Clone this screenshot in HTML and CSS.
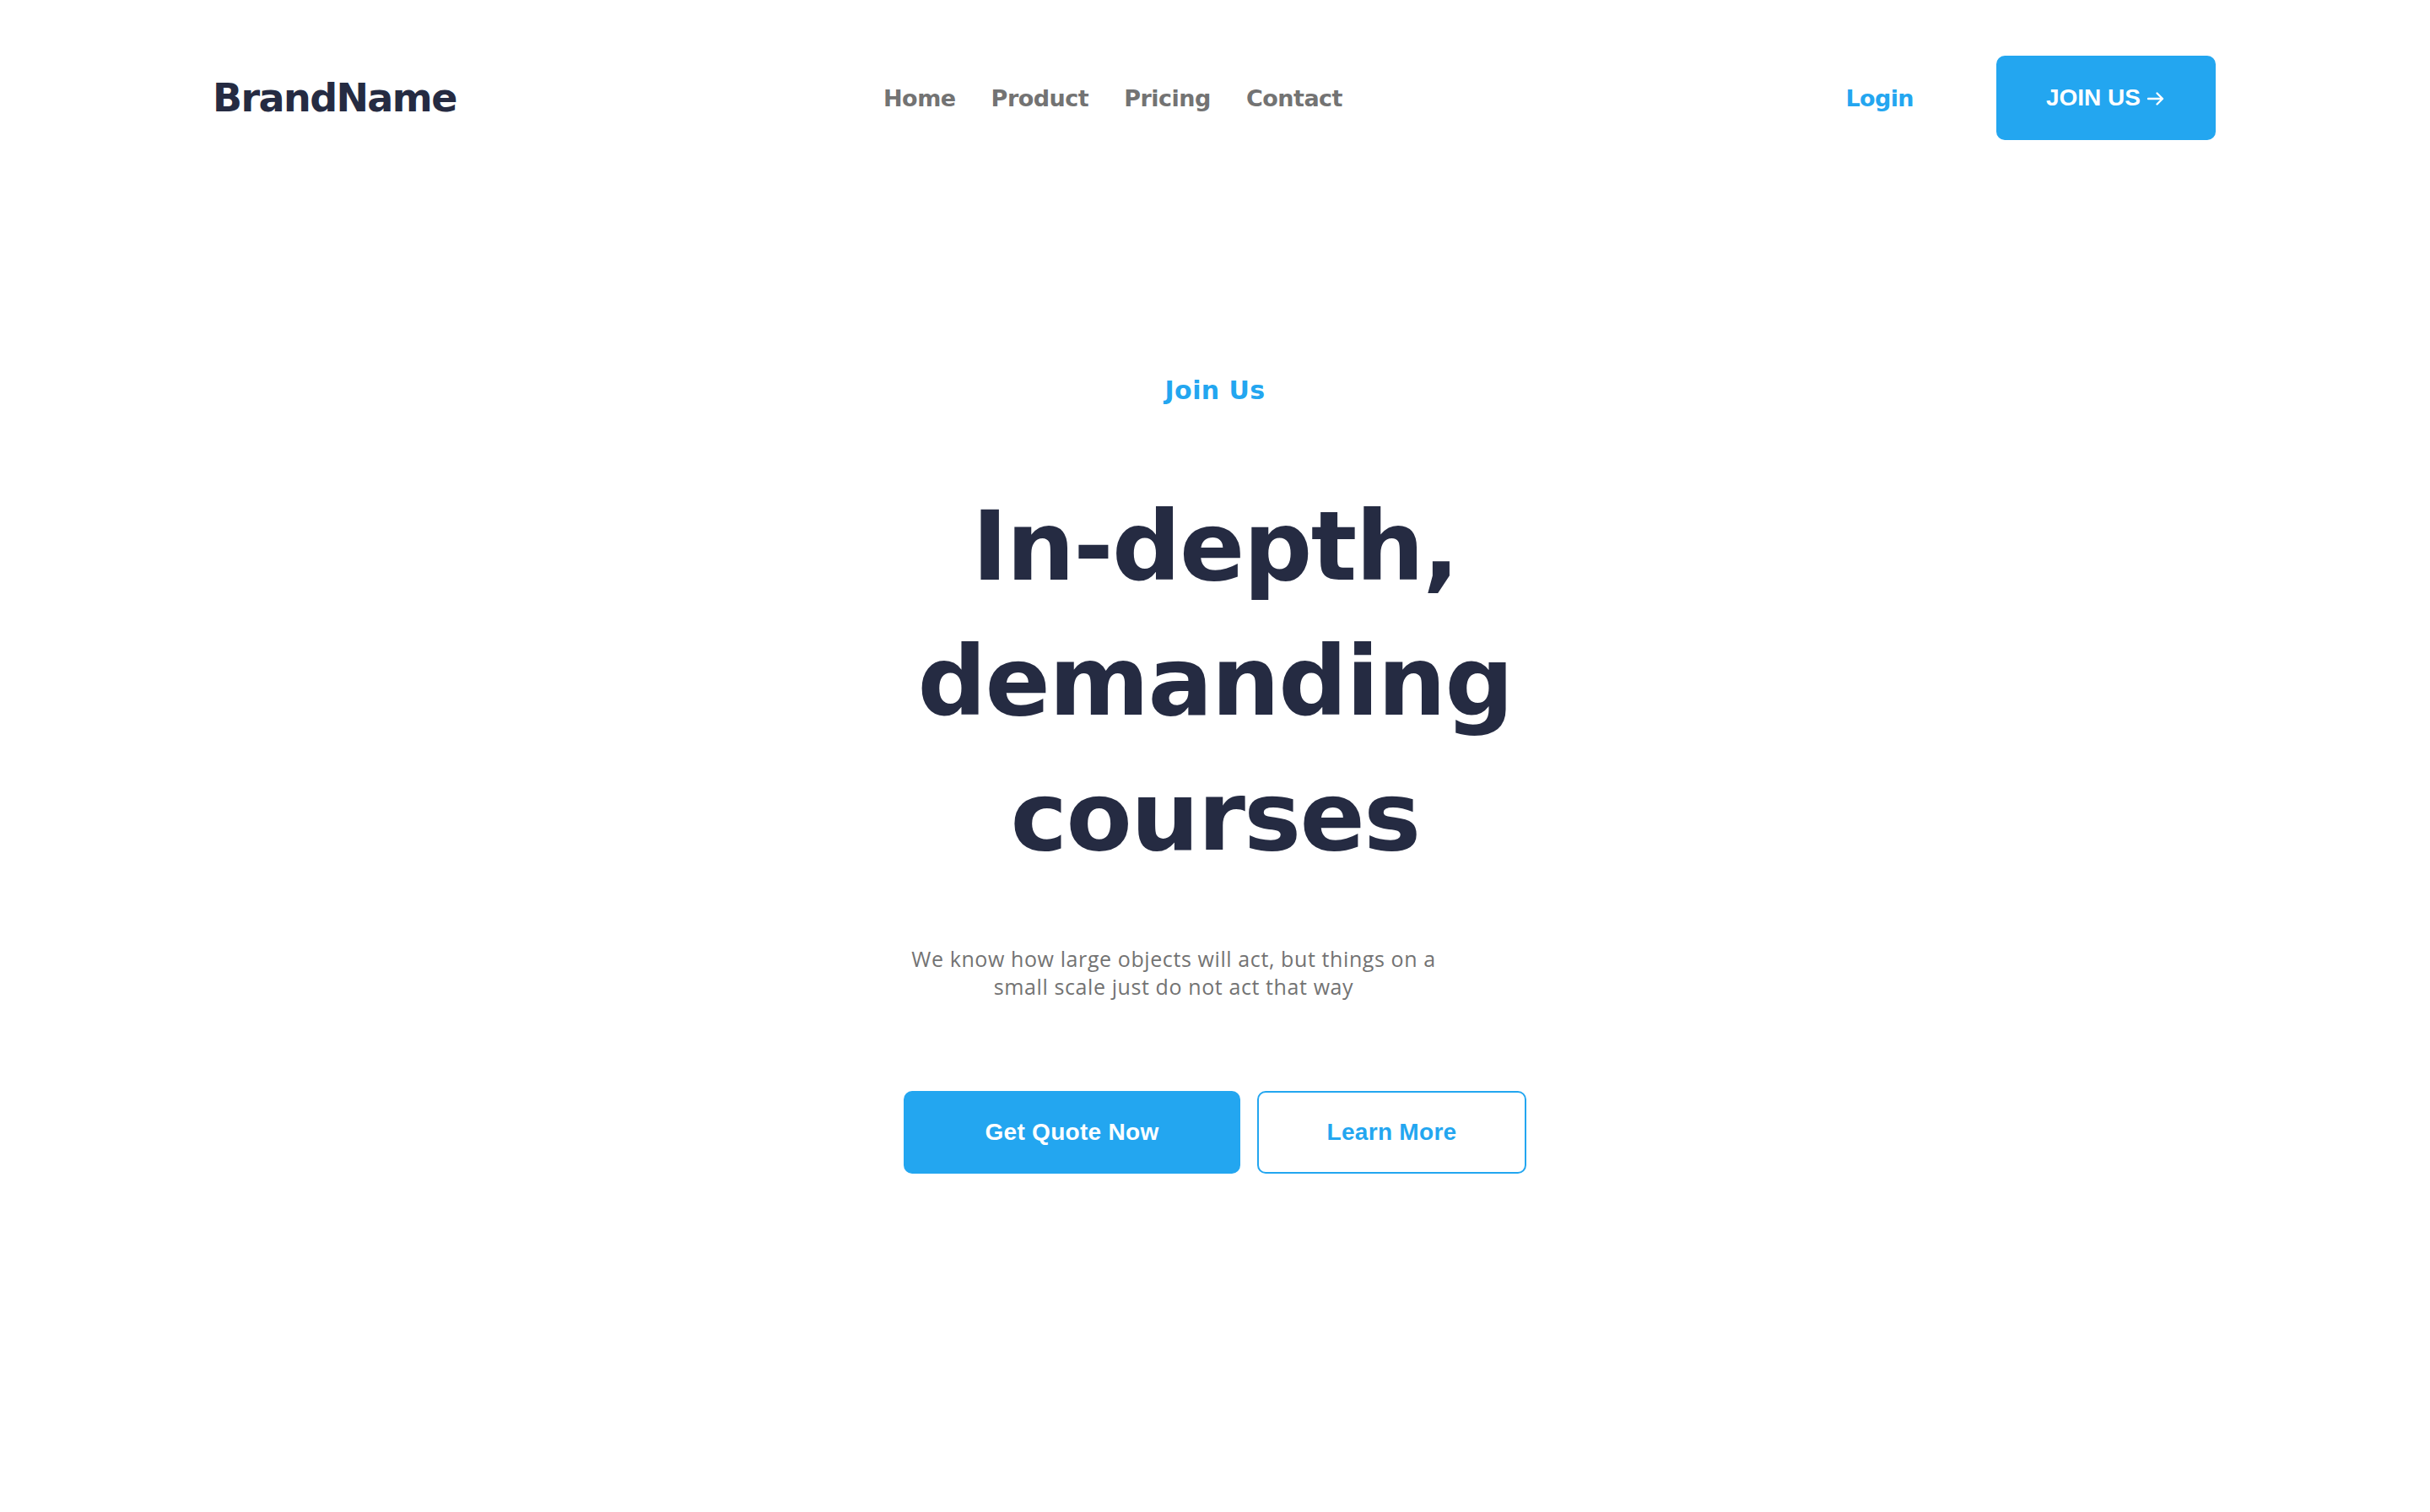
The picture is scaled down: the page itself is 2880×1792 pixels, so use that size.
FILE: index.html
```html
<!DOCTYPE html>
<html lang="en">
<head>
<meta charset="utf-8">
<title>BrandName</title>
<link rel="stylesheet" href="styles.css">
</head>
<body>
<header class="header">
  <div class="brand">BrandName</div>
  <nav class="nav">
    <a class="nav-link" href="#">Home</a>
    <a class="nav-link" href="#">Product</a>
    <a class="nav-link" href="#">Pricing</a>
    <a class="nav-link" href="#">Contact</a>
  </nav>
  <div class="actions">
    <a class="login" href="#">Login</a>
    <a class="join-btn" href="#">JOIN US
      <svg class="arrow" viewBox="0 0 24 24" width="24" height="24" aria-hidden="true"><path d="M3 12H20M13.5 5.5L20 12L13.5 18.5" fill="none" stroke="#fff" stroke-width="2.4" stroke-linecap="round" stroke-linejoin="round"/></svg>
    </a>
  </div>
</header>
<main class="hero">
  <p class="eyebrow">Join Us</p>
  <h1 class="title">In-depth, demanding courses</h1>
  <div class="hero-body">
    <p class="lead">We know how large objects will act, but things on a small scale just do not act that way</p>
    <div class="cta">
      <a class="btn btn-primary" href="#">Get Quote Now</a>
      <a class="btn btn-outline" href="#">Learn More</a>
    </div>
  </div>
</main>
</body>
</html>
```
FILE: styles.css
```css
* { box-sizing: border-box; }
html, body { margin: 0; padding: 0; background: #ffffff; }
body {
  font-family: "DejaVu Sans", "Liberation Sans", sans-serif;
  color: #252B42;
  width: 2880px;
  min-height: 1792px;
}
a { text-decoration: none; }

.header {
  display: flex;
  align-items: center;
  height: 232px;
  padding: 0 254px 0 252px;
}
.brand {
  flex: 0 0 795px;
  font-size: 46px;
  font-weight: 700;
  letter-spacing: -1.6px;
  color: #252B42;
}
.nav {
  display: flex;
  gap: 42px;
}
.nav-link {
  font-size: 27px;
  font-weight: 700;
  letter-spacing: -0.5px;
  color: #737373;
}
.actions {
  margin-left: auto;
  display: flex;
  align-items: center;
  gap: 98px;
}
.login {
  font-size: 27px;
  font-weight: 700;
  letter-spacing: -0.6px;
  color: #23A6F0;
}
.join-btn {
  display: flex;
  align-items: center;
  justify-content: center;
  gap: 6px;
  width: 260px;
  height: 100px;
  border-radius: 10px;
  background: #23A6F0;
  color: #ffffff;
  font-family: "Liberation Sans", Arial, sans-serif;
  font-weight: 700;
  font-size: 28px;
}
.arrow { display: block; margin-top: 1px; }

.hero {
  display: flex;
  flex-direction: column;
  align-items: center;
  padding-top: 211px;
}
.eyebrow {
  margin: 0;
  font-size: 30px;
  line-height: 40px;
  font-weight: 700;
  letter-spacing: 0.4px;
  color: #23A6F0;
}
.title {
  margin: 85px 0 0;
  max-width: 800px;
  text-align: center;
  font-size: 114px;
  line-height: 160px;
  font-weight: 700;
  letter-spacing: -1.6px;
  color: #252B42;
}
.hero-body {
  width: 738px;
  margin-top: 72px;
}
.lead {
  margin: 0;
  width: 640px;
  text-align: center;
  font-family: "Open Sans", "Liberation Sans", sans-serif;
  font-size: 25px;
  line-height: 33px;
  font-weight: 400;
  letter-spacing: 0.6px;
  color: #737373;
}
.cta {
  display: flex;
  gap: 20px;
  margin-top: 107px;
}
.btn {
  display: flex;
  align-items: center;
  justify-content: center;
  height: 98px;
  border-radius: 10px;
  font-family: "Liberation Sans", Arial, sans-serif;
  font-weight: 700;
  font-size: 28px;
  letter-spacing: 0.3px;
}
.btn-primary {
  width: 399px;
  background: #23A6F0;
  color: #ffffff;
}
.btn-outline {
  width: 319px;
  border: 2px solid #23A6F0;
  color: #23A6F0;
  background: #ffffff;
}
```
